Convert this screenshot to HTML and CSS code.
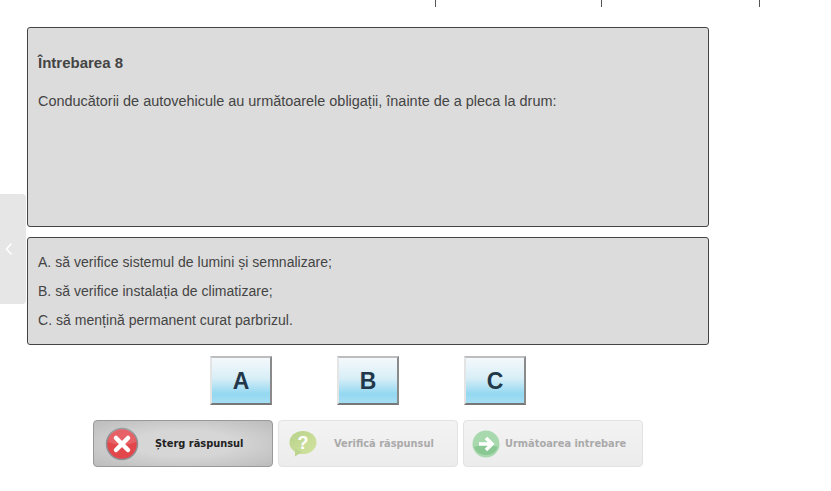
FILE: index.html
```html
<!DOCTYPE html>
<html lang="en">
<head>
    <meta charset="UTF-8">
    <meta name="viewport" content="width=device-width, initial-scale=1.0">
    <title>Chestionar</title>
    <link rel="stylesheet" href="styles.css">
</head>
<body>
    <div class="top-ticks">
        <span class="tick tick-1"></span>
        <span class="tick tick-2"></span>
        <span class="tick tick-3"></span>
    </div>

    <a class="side-tab">
        <svg width="8" height="14" viewBox="0 0 8 14"><path d="M6.5 1.5 L1.5 7 L6.5 12.5" fill="none" stroke="#fff" stroke-width="1.6"/></svg>
    </a>

    <div class="content">
        <div class="box question">
            <h4>Întrebarea 8</h4>
            <p>Conducătorii de autovehicule au următoarele obligații, înainte de a pleca la drum:</p>
        </div>

        <div class="box answers">
            <p>A. să verifice sistemul de lumini și semnalizare;</p>
            <p>B. să verifice instalația de climatizare;</p>
            <p>C. să mențină permanent curat parbrizul.</p>
        </div>

        <div class="letters">
            <button class="letter">A</button>
            <button class="letter">B</button>
            <button class="letter">C</button>
        </div>

        <div class="actions">
            <button class="action action-delete">
                <svg class="icon" width="34" height="34" viewBox="0 0 34 34">
                    <circle cx="17" cy="17" r="15.5" fill="#e2474c" stroke="#8d9296" stroke-width="1.5"/>
                    <path d="M3 15 A14 14 0 0 1 31 15 Q17 21 3 15Z" fill="#fff" opacity="0.15"/>
                    <path d="M11 11 L23 23 M23 11 L11 23" stroke="#fff" stroke-width="4.5" stroke-linecap="round"/>
                </svg>
                <span>Șterg răspunsul</span>
            </button>
            <button class="action action-off action-check">
                <svg class="icon" width="28" height="26" viewBox="0 0 28 26">
                    <defs>
                        <linearGradient id="bubble" x1="0" y1="0" x2="1" y2="1">
                            <stop offset="0" stop-color="#b7d28a"/>
                            <stop offset="1" stop-color="#d3e4a0"/>
                        </linearGradient>
                    </defs>
                    <ellipse cx="14" cy="11.5" rx="13.5" ry="11.5" fill="url(#bubble)"/>
                    <path d="M6 18 L6 25.5 L13 21Z" fill="#bcd58e"/>
                    <text x="14" y="18" text-anchor="middle" class="icon-mark">?</text>
                </svg>
                <span>Verifică răspunsul</span>
            </button>
            <button class="action action-off action-next">
                <svg class="icon" width="28" height="28" viewBox="0 0 28 28">
                    <circle cx="14" cy="14" r="13.5" fill="#a8d9ae"/>
                    <path d="M2 17 A13 13 0 0 0 26 17 Q14 12 2 17Z" fill="#7cc088" opacity="0.7"/>
                    <path d="M7 14 H19 M14 8 L20 14 L14 20" fill="none" stroke="#fff" stroke-width="3.6"/>
                </svg>
                <span>Următoarea intrebare</span>
            </button>
        </div>
    </div>
</body>
</html>
```

FILE: styles.css
```css
* {
    box-sizing: border-box;
}
body {
    margin: 0;
    background-color: #fff;
    color: #444;
    font-family: "Liberation Sans", Arial, sans-serif;
    font-size: 14px;
    line-height: 20px;
}
.top-ticks {
    display: flex;
    height: 7px;
    padding-left: 435px;
}
.tick {
    border-left: 1px solid #555;
    height: 7px;
}
.tick-1 {
    width: 166px;
}
.tick-2 {
    width: 158px;
}
.tick-3 {
    width: 1px;
}
.side-tab {
    position: absolute;
    left: 0;
    top: 194px;
    width: 26px;
    height: 110px;
    background-color: #e6e6e6;
    border-radius: 0 4px 4px 0;
    display: flex;
    align-items: center;
    padding-left: 5px;
}
.content {
    width: 682px;
    margin: 20px 0 0 27px;
}
.box {
    background-color: #dcdcdc;
    border: 1px solid #444;
    border-radius: 3px;
    padding: 0 10px;
}
.box p {
    margin: 0;
}
.question {
    height: 200px;
    padding-top: 25px;
    font-size: 14.45px;
}
.question h4 {
    margin: 0 0 18px;
    font-size: 15px;
    font-weight: bold;
}
.answers {
    height: 108px;
    margin-top: 10px;
    padding-top: 14px;
    font-size: 14px;
    letter-spacing: 0.03px;
}
.answers p {
    height: 29px;
}
.letters {
    display: flex;
    gap: 65px;
    margin: 11px 0 0 183px;
}
.letter {
    width: 62px;
    height: 49px;
    padding: 1px 0 0 0;
    border: 2px solid;
    border-color: #bdbdbd #8a8a8a #777 #e4e4e4;
    background: linear-gradient(to bottom, #f4f9fb 0%, #d8eef7 45%, #93d8f1 80%, #a6def3 100%);
    color: #22384a;
    font-family: "Liberation Sans", Arial, sans-serif;
    font-size: 23px;
    font-weight: bold;
}
.actions {
    display: flex;
    gap: 5px;
    margin: 15px 0 0 66px;
}
.action {
    display: flex;
    align-items: center;
    width: 180px;
    height: 47px;
    padding: 0;
    border: 1px solid #e2e2e2;
    border-radius: 4px;
    background: linear-gradient(to bottom, #f3f3f3, #ececec);
    color: #aaa;
    font-family: "DejaVu Sans", Verdana, sans-serif;
    font-size: 9.85px;
    font-weight: bold;
    white-space: nowrap;
}
.action-delete {
    border-color: #999;
    background: radial-gradient(ellipse at center, #d6d6d6 40%, #bcbcbc 100%);
    color: #222;
    padding-left: 11px;
}
.action-delete span {
    margin-left: 16px;
}
.action-check {
    padding-left: 10px;
}
.action-check span {
    margin-left: 17px;
}
.action-next {
    padding-left: 8px;
}
.action-next span {
    margin-left: 5px;
}
.icon-mark {
    fill: #fff;
    font-family: "Liberation Sans", Arial, sans-serif;
    font-size: 18px;
    font-weight: bold;
}
```
